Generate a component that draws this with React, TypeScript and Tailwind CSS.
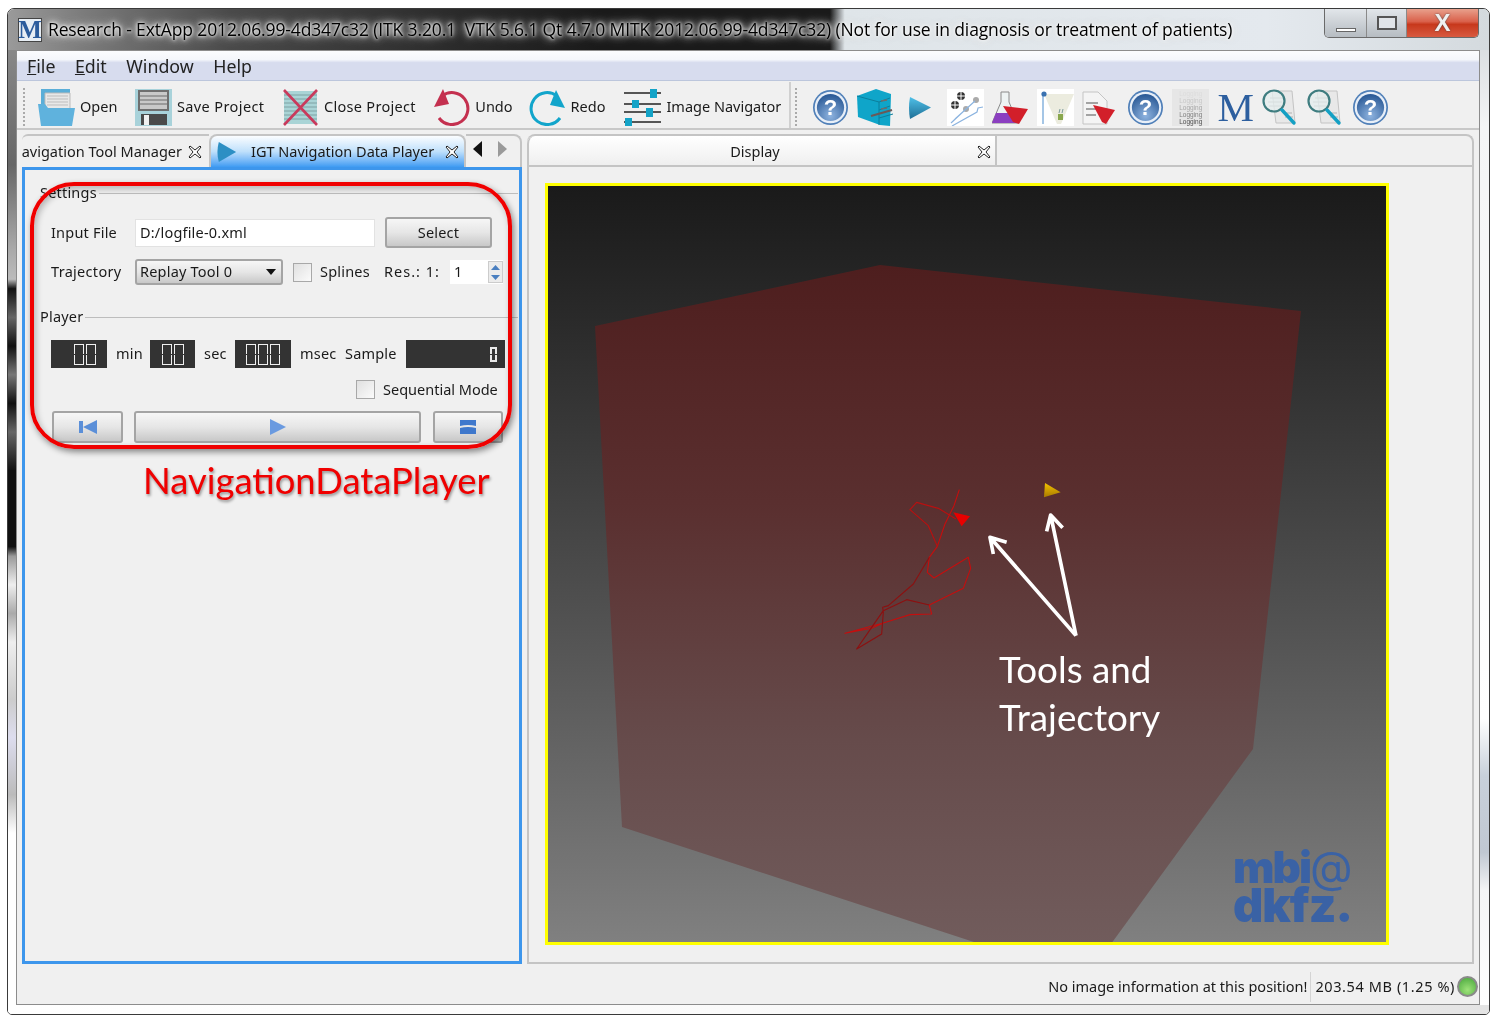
import React from "react";

const Help = () => (
  <svg width="37" height="37" viewBox="0 0 37 37">
    <defs>
      <radialGradient id="hg" cx="50%" cy="80%" r="75%">
        <stop offset="0" stopColor="#8fb4e0" />
        <stop offset="1" stopColor="#2d5c98" />
      </radialGradient>
    </defs>
    <circle cx="18.500" cy="18.500" r="17.500" fill="#4f7fb8" />
    <circle cx="18.500" cy="18.500" r="15.800" fill="#e8eff8" />
    <circle cx="18.500" cy="18.500" r="13.600" fill="url(#hg)" />
    <text x="18.500" y="26" textAnchor="middle" fontFamily="Liberation Sans" fontWeight="700" fontSize="22" fill="#fff">?</text>
  </svg>
);

const Open = () => (
  <svg width="37" height="37" viewBox="0 0 37 37">
    <path d="M3 0h29v33H3z" fill="#5aaed8" />
    <path d="M7 4h25v18H7z" fill="#e8e8e8" stroke="#bbb" />
    <path d="M9 7h21M9 10h21M9 13h21M9 16h21" stroke="#bdbdbd" />
    <path d="M0 15h7l3 4h27l-3 18H3z" fill="#5fb2dd" />
  </svg>
);
const Save = () => (
  <svg width="37" height="37" viewBox="0 0 37 37">
    <path d="M0 0h37v37H0z" fill="#a8d2da" />
    <path d="M3 1h31v21H3z" fill="#6f6f6f" />
    <path d="M5 3h27v17H5z" fill="#c9c9c9" />
    <path d="M5 7h27M5 11h27M5 15h27" stroke="#8a8a8a" strokeWidth="1.500" />
    <path d="M6 25h26v11H6z" fill="#4a4a4a" />
    <path d="M9 26h5v10H9z" fill="#f0f0f0" />
  </svg>
);
const CloseP = () => (
  <svg width="37" height="37" viewBox="0 0 37 37">
    <path d="M2 2h33v33H2z" fill="#a9d4d6" />
    <path d="M2 6h33M2 10h33M2 14h33M2 18h33M2 22h33M2 26h33M2 30h33" stroke="#7fa2a4" />
    <path d="M2 1l33 35M35 1L2 36" stroke="#c93a5c" strokeWidth="2.600" />
  </svg>
);
const Undo = () => (
  <svg width="37" height="37" viewBox="0 0 37 37">
    <path d="M9 7A16 16 0 1 1 6 29" fill="none" stroke="#c4304f" strokeWidth="3" />
    <path d="M1 18L10 0l6 15z" fill="#c4304f" />
  </svg>
);
const Redo = () => (
  <svg width="37" height="37" viewBox="0 0 37 37">
    <path d="M28 7A16 16 0 1 0 31 29" fill="none" stroke="#12a5cb" strokeWidth="3" />
    <path d="M36 19L27 1l-6 15z" fill="#12a5cb" />
  </svg>
);
const Nav = () => (
  <svg width="37" height="37" viewBox="0 0 37 37">
    <path d="M0 4h37M0 15h37M0 23h37M0 33h37" stroke="#555" strokeWidth="2.200" />
    <path d="M26 0h7v9h-7zM8 11h7v8H8zM22 19h7v9h-7zM1 29h7v8H1z" fill="#14a3c7" />
  </svg>
);
const Cabinet = () => (
  <svg width="37" height="37" viewBox="0 0 37 37">
    <path d="M0 7L19 0l15 5-1 32-10-1L1 28z" fill="#0fa5c9" />
    <path d="M0 7l22 6v23" stroke="#0b7f9c" fill="none" />
    <path d="M22 13l11-4M22 21l11-4M22 29l14-4" stroke="#0b7f9c" />
    <path d="M24 12l6-1M24 20l6-1" stroke="#6d6d6d" strokeWidth="1.600" />
    <path d="M14 27l21-6" stroke="#6a5a58" strokeWidth="2.200" />
  </svg>
);
const Play = () => (
  <svg width="37" height="37" viewBox="0 0 37 37">
    <defs>
      <linearGradient id="pg" x1="0" y1="0" x2="0" y2="1">
        <stop offset="0" stopColor="#4fc0e8" />
        <stop offset="1" stopColor="#1f6f96" />
      </linearGradient>
    </defs>
    <path d="M8 8l21 10.500L8 30q-2-11 0-22z" fill="url(#pg)" />
  </svg>
);
const Tools = () => (
  <svg width="37" height="37" viewBox="0 0 37 37">
    <path d="M0 0h37v37H0z" fill="#fff" />
    <circle cx="14" cy="7" r="4" fill="#333" />
    <circle cx="8" cy="16" r="4" fill="#333" />
    <path d="M14 3v8M10 7h8M8 12v8M4 16h8" stroke="#fff" />
    <circle cx="29" cy="11" r="3" fill="#aaa" />
    <circle cx="19" cy="20" r="3" fill="#aaa" />
    <path d="M28 12L8 30M19 20L4 34M36 18l-5 1-1 4L5 37" stroke="#8cb4e0" strokeWidth="1.200" fill="none" />
  </svg>
);
const Flask = () => (
  <svg width="37" height="37" viewBox="0 0 37 37">
    <path d="M9 3h8v10l9 21H0l9-21z" fill="#eef3f3" stroke="#8a8a8a" />
    <path d="M4 24h18l4 10H0z" fill="#8b3fc0" />
    <path d="M11 17l25 3-9 15-6-2z" fill="#d21f2a" />
  </svg>
);
const Ultra = () => (
  <svg width="37" height="37" viewBox="0 0 37 37">
    <path d="M0 0h37v37H0z" fill="#fff" />
    <path d="M7 5h30L24 35h-4z" fill="#ececdf" />
    <path d="M6 5v30" stroke="#8fb8e0" strokeWidth="1.600" />
    <circle cx="7" cy="5" r="2.600" fill="#3a72b0" />
    <path d="M21 25h5v6h-5z" fill="#8aa84e" />
    <path d="M22 24l1-4M25 24l1-4" stroke="#7a9a9a" />
  </svg>
);
const Doc = () => (
  <svg width="37" height="37" viewBox="0 0 37 37">
    <path d="M1 3h15l9 9v23H1z" fill="#f4f4f4" stroke="#c4c4c4" />
    <path d="M4 14h12M4 20h10M4 26h10" stroke="#888" strokeWidth="1.600" />
    <path d="M11 16l22 5-9 14-4-2z" fill="#d21f2a" />
  </svg>
);
const Mag = () => (
  <svg width="37" height="37" viewBox="0 0 37 37">
    <path d="M10 2h20l3 32H14z" fill="#e8e8e8" stroke="#c4c4c4" />
    <path d="M8 9h14M6 13h14M7 17h14M22 24h8M23 28h8" stroke="#b0b0b0" />
    <circle cx="12" cy="12" r="10.500" fill="#e4eeee" fillOpacity=".75" stroke="#3f7d80" strokeWidth="2.200" />
    <path d="M20 21l12 13" stroke="#14a0c4" strokeWidth="3.400" strokeLinecap="round" />
  </svg>
);
const Logging = () => (
  <div className="flex h-[37px] w-[37px] flex-col items-center justify-center bg-[#e6e6e6] font-['Liberation_Sans',sans-serif] text-[6.5px] leading-[7px]">
    <span className="text-[#dcdcdc]">Logging</span>
    <span className="text-[#c8c8c8]">Logging</span>
    <span className="text-[#a8a8a8]">Logging</span>
    <span className="text-[#808080]">Logging</span>
    <span className="text-[#505050]">Logging</span>
  </div>
);

const XIcon = () => (
  <svg width="14" height="14" viewBox="0 0 14 14" className="shrink-0">
    <path d="M2 1l5 4 5-4 1 1-4 5 4 5-1 1-5-4-5 4-1-1 4-5-4-5z" fill="#fff" stroke="#222" strokeWidth="1" />
  </svg>
);

const Digit = () => (
  <div className="flex h-[21px] w-[10px] flex-col justify-between">
    <div className="h-[10px] border-x border-t border-[#f0f0f0]" />
    <div className="h-[10px] border-x border-b border-[#f0f0f0]" />
  </div>
);
const Lcd = ({ n, w }: { n: number; w: string }) => (
  <div className={`flex h-[28px] items-center justify-end gap-[2px] bg-[#333333] pr-[11px] ${w}`}>
    {Array.from({ length: n }).map((_, i) => (
      <Digit key={i} />
    ))}
  </div>
);

const Check = () => (
  <div className="h-[19px] w-[19px] shrink-0 border border-[#a8a8a8] bg-[linear-gradient(135deg,#e0e0e0,#fbfbfb)] p-[2px]" />
);

const btn = "border-2 border-[#a4a4a4] rounded-[3px] bg-linear-to-b from-[#f6f6f6] via-[#e6e6e6] to-[#c8c8c8] flex items-center justify-center";

export default function App() {
  return (
    <div className="h-[1023px] w-[1493px] overflow-hidden bg-white pt-[8px] pl-[7px] font-['Noto_Sans',sans-serif] text-[14.5px] text-[#1a1a1a] blur-[0.4px]">
      <div className="relative flex h-[1007px] w-[1483px] flex-col overflow-hidden rounded-t-[7px] rounded-b-[5px] border border-[#3a3a3a] bg-white">
        {/* title bar */}
        <div className="flex h-[41px] shrink-0 items-center bg-[linear-gradient(90deg,#9a9a9a_0,#7c7c7c_5%,#4a4a4a_15%,#2b2b2b_30%,#1a1a1a_40%,#1a1a1a_55.5%,#dfe5e9_56.5%,#e4e9ee_85%,#d4dade_100%)] pl-[10px]">
          <div className="flex h-[24px] w-[24px] items-center justify-center border border-[#444] bg-[#e8eef4] font-['Liberation_Serif',serif] text-[25px] font-bold leading-none text-[#2c5c9c]">
            M
          </div>
          <span className="ml-[6px] whitespace-nowrap font-['Open_Sans',sans-serif] text-[17.5px] tracking-[-0.13px] text-[#000000] [text-shadow:0_0_3px_#fff,0_0_5px_#fff,0_0_8px_#eee,0_0_12px_#ccc]">
            Research - ExtApp 2012.06.99-4d347c32 (ITK 3.20.1&nbsp; VTK 5.6.1 Qt 4.7.0 MITK 2012.06.99-4d347c32) (Not for use in diagnosis or treatment of patients)
          </span>
          {/* window buttons */}
          <div className="absolute top-0 right-[10px] flex h-[29px] overflow-hidden rounded-b-[5px] border border-t-0 border-[#6a6a6a]">
            <div className="flex w-[42px] items-end justify-center border-r border-[#8a8a8a] bg-linear-to-b from-[#e2e6ea] to-[#b6bcc2] pb-[5px]">
              <div className="h-[4px] w-[20px] border border-[#666] bg-white" />
            </div>
            <div className="flex w-[40px] items-center justify-center border-r border-[#8a8a8a] bg-linear-to-b from-[#e2e6ea] to-[#b6bcc2]">
              <div className="h-[14px] w-[20px] border-2 border-[#555] bg-[#e0e4e8] p-[2px]" />
            </div>
            <div className="flex w-[71px] items-center justify-center bg-[linear-gradient(180deg,#e8a08c_0,#d9604a_45%,#c7381c_55%,#d85a40_100%)]">
              <span className="font-['Liberation_Sans',sans-serif] text-[24px] font-bold leading-none text-[#f0f0f0] [text-shadow:0_0_2px_#444]">X</span>
            </div>
          </div>
        </div>

        <div className="flex min-h-0 flex-1">
          {/* left frame */}
          <div className="w-[8px] shrink-0 bg-[linear-gradient(180deg,#888_0,#666_12%,#aaa_21%,#bbb_24%,#111_25%,#666_28%,#111_31%,#777_34%,#111_37%,#666_40%,#111_44%,#111_52%,#999_53%,#eee_56%,#aaa_59%,#eee_62%,#ccc_68%,#dde_72%,#bbb_78%,#fff_82%,#fff_100%)]" />
          <div className="flex min-w-0 flex-1 flex-col">
            {/* main */}
            <div className="flex min-h-0 flex-1 flex-col border border-[#8c8c8c] bg-[#f0f0f0]">
              {/* menu */}
              <div className="flex h-[30px] shrink-0 items-center gap-[19.5px] border-b border-[#bcc6dc] bg-[linear-gradient(180deg,#fbfcfe_0,#f4f6fb_30%,#d7dcee_40%,#d7dcee_100%)] pl-[10px] pt-[1px] text-[17.8px] text-[#222]">
                <span><span className="underline">F</span>ile</span>
                <span><span className="underline">E</span>dit</span>
                <span>Window</span>
                <span>Help</span>
              </div>
              {/* toolbar */}
              <div className="flex h-[49px] shrink-0 items-center border-b-2 border-[#c8c8c8] pl-[6px] pt-[5px]">
                <div className="h-[38px] w-[2px] border-l-2 border-dotted border-[#aaa]" />
                <div className="ml-[13px] flex items-center gap-[17.5px]">
                  <div className="flex items-center gap-[5px]"><Open /><span>Open</span></div>
                  <div className="flex items-center gap-[5px]"><Save /><span className="whitespace-nowrap tracking-[0.4px]">Save Project</span></div>
                  <div className="flex items-center gap-[5px]"><CloseP /><span className="whitespace-nowrap tracking-[0.3px]">Close Project</span></div>
                  <div className="flex items-center gap-[5px]"><Undo /><span>Undo</span></div>
                  <div className="-ml-[1.5px] flex items-center gap-[5px]"><Redo /><span>Redo</span></div>
                  <div className="ml-[1.5px] flex items-center gap-[5px]"><Nav /><span className="whitespace-nowrap">Image Navigator</span></div>
                </div>
                <div className="ml-[8px] h-[46px] w-[2px] -translate-y-[2px] border-l-2 border-[#d0d0d0]" />
                <div className="ml-[4px] h-[38px] w-[2px] border-l-2 border-dotted border-[#aaa]" />
                <div className="ml-[15px] flex items-center gap-[8px]">
                  <Help />
                  <Cabinet />
                  <Play />
                  <Tools />
                  <Flask />
                  <Ultra />
                  <Doc />
                  <Help />
                  <Logging />
                  <div className="flex h-[37px] w-[37px] items-center justify-center font-['Liberation_Serif',serif] text-[41px] leading-none text-[#2d5f9f]">M</div>
                  <Mag />
                  <Mag />
                  <Help />
                </div>
              </div>

              {/* panes */}
              <div className="flex min-h-0 flex-1 gap-[5px] px-[5px] pt-[4px]">
                {/* left pane */}
                <div className="relative flex w-[500px] shrink-0 flex-col">
                  <div className="flex h-[33px] shrink-0 items-stretch overflow-hidden">
                    <div className="flex w-[187px] shrink-0 items-center justify-end gap-[6px] overflow-hidden rounded-tl-[6px] border-t-2 border-[#c4c4c4] pr-[7px]">
                      <span className="whitespace-nowrap">Navigation Tool Manager</span>
                      <XIcon />
                    </div>
                    <div className="flex w-[257px] shrink-0 items-center rounded-t-[8px] border-2 border-b-0 border-[#c4c4c4] bg-linear-to-b from-[#fbfdff] via-[#bfe0fb] to-[#3d9bf2] pl-[6px]">
                      <div className="flex w-[20px] justify-center"><svg width="22" height="24" viewBox="0 0 22 24"><path d="M2 1l19 11L2 23q-3-11 0-22z" fill="#2c8fc4" /></svg></div>
                      <span className="ml-[14px] whitespace-nowrap">IGT Navigation Data Player</span>
                      <div className="ml-[11px]"><XIcon /></div>
                    </div>
                    <div className="flex flex-1 items-center rounded-tr-[8px] border-t-2 border-r-2 border-[#c4c4c4] pb-[5px] pl-[6px]">
                      <svg width="12" height="16" viewBox="0 0 12 16"><path d="M10 0v16L1 8z" fill="#111" /></svg>
                      <svg width="12" height="16" viewBox="0 0 12 16" className="ml-[12px]"><path d="M2 0v16l9-8z" fill="#9a9a9a" /></svg>
                    </div>
                  </div>
                  <div className="relative min-h-0 flex-1 border-[3px] border-[#3d96ec] bg-[#f0f0f0] tracking-[0.2px]">
                    {/* settings */}
                    <div className="mt-[13px] flex h-[20px] items-center pl-[15px] pr-[1px]">
                      <span>Settings</span>
                      <div className="ml-[2px] h-px flex-1 bg-[#bdbdbd]" />
                    </div>
                    <div className="mt-[14px] flex h-[31px] items-center pl-[26px]">
                      <span className="w-[84px]">Input File</span>
                      <div className="flex h-[28px] w-[240px] items-center border border-[#e2e2e2] bg-white pl-[4px]">D:/logfile-0.xml</div>
                      <div className={`ml-[10px] h-[31px] w-[107px] ${btn}`}>Select</div>
                    </div>
                    <div className="mt-[11px] flex h-[26px] items-center pl-[26px]">
                      <span className="w-[84px] tracking-[0.3px]">Trajectory</span>
                      <div className={`h-[26px] w-[148px] justify-between! pl-[3px] pr-[5px] ${btn}`}>
                        <span>Replay Tool 0</span>
                        <svg width="10" height="6" viewBox="0 0 10 6"><path d="M0 0h10L5 6z" fill="#111" /></svg>
                      </div>
                      <div className="ml-[10px]"><Check /></div>
                      <span className="ml-[8px] w-[50px]">Splines</span>
                      <span className="ml-[14px] w-[56px] whitespace-nowrap tracking-[1px]">Res.: 1:</span>
                      <div className="ml-[10px] flex h-[24px] w-[53px] items-center justify-between bg-white pl-[4px]">
                        <span>1</span>
                        <div className="flex h-[22px] w-[15px] flex-col items-center justify-around border border-[#ccc] bg-[#ececec]">
                          <svg width="9" height="5" viewBox="0 0 9 5"><path d="M0 5h9L4.500 0z" fill="#4a7fc0" /></svg>
                          <svg width="9" height="5" viewBox="0 0 9 5"><path d="M0 0h9L4.500 5z" fill="#4a7fc0" /></svg>
                        </div>
                      </div>
                    </div>
                    {/* player */}
                    <div className="mt-[22px] flex h-[20px] items-center pl-[15px] pr-[1px]">
                      <span>Player</span>
                      <div className="ml-[2px] h-px flex-1 bg-[#bdbdbd]" />
                    </div>
                    <div className="mt-[13px] flex h-[28px] items-center pl-[26px]">
                      <Lcd n={2} w="w-[56px]" />
                      <span className="ml-[9px] w-[26px]">min</span>
                      <div className="ml-[8px]"><Lcd n={2} w="w-[45px]" /></div>
                      <span className="ml-[9px] w-[24px]">sec</span>
                      <div className="ml-[7px]"><Lcd n={3} w="w-[56px]" /></div>
                      <span className="ml-[9px] w-[37px]">msec</span>
                      <span className="ml-[8px] w-[52px]">Sample</span>
                      <div className="ml-[9px] flex h-[28px] w-[99px] items-center justify-end bg-[#333333] pr-[8px]">
                        <div className="flex h-[15px] w-[7px] flex-col justify-between">
                          <div className="h-[7px] border-x-2 border-t-2 border-[#e8e8e8]" />
                          <div className="h-[7px] border-x-2 border-b-2 border-[#e8e8e8]" />
                        </div>
                      </div>
                    </div>
                    <div className="mt-[12px] flex h-[19px] items-center pl-[331px]">
                      <Check />
                      <span className="ml-[8px] whitespace-nowrap tracking-normal">Sequential Mode</span>
                    </div>
                    <div className="mt-[12px] flex h-[32px] pl-[27px]">
                      <div className={`w-[71px] ${btn}`}>
                        <svg width="18" height="14" viewBox="0 0 18 14"><path d="M0 1h4v12H0zM18 0v14L4 7z" fill="#5b8fd8" /></svg>
                      </div>
                      <div className={`ml-[11px] w-[287px] ${btn}`}>
                        <svg width="16" height="16" viewBox="0 0 16 16"><path d="M0 0l16 8-16 8z" fill="#6a9ae0" /></svg>
                      </div>
                      <div className={`ml-[12px] w-[70px] ${btn}`}>
                        <svg width="16" height="14" viewBox="0 0 16 14"><path d="M0 0h16v6q-8-2-16 0zM0 8q8-2 16 0v6H0z" fill="#3f78cc" /></svg>
                      </div>
                    </div>
                    {/* annotation */}
                    <div className="absolute top-[12px] left-[5px] h-[267px] w-[482px] rounded-[44px] border-4 border-[#f00000] shadow-[2px_3px_6px_rgba(0,0,0,.45),inset_2px_3px_6px_rgba(0,0,0,.25)]" />
                    <div className="absolute top-[285px] left-[118px] whitespace-nowrap font-['Lato',sans-serif] text-[36.4px] leading-[50px] tracking-normal text-[#f00000] [text-shadow:1px_2px_3px_rgba(0,0,0,.4)]">
                      NavigationDataPlayer
                    </div>
                  </div>
                </div>

                {/* right pane */}
                <div className="flex min-w-0 flex-1 flex-col">
                  <div className="flex h-[31px] shrink-0 rounded-t-[8px] border-t-2 border-r-2 border-[#c4c4c4]">
                    <div className="flex w-[470px] items-center rounded-tl-[8px] border-x-2 border-[#c4c4c4] bg-linear-to-b from-white to-[#efefef] pr-[4px] pt-[2px]">
                      <span className="flex-1 pl-[4px] text-center">Display</span>
                      <XIcon />
                    </div>
                  </div>
                  <div className="min-h-0 flex-1 border-2 border-[#c4c4c4] p-[16px]">
                    <div className="relative h-[762px] w-[844px] overflow-hidden border-[3px] border-[#ffff00] bg-linear-to-b from-[#1a1a1a] to-[#808080]">
                      <svg className="absolute inset-0" width="838" height="756" viewBox="548 187 838 756">
                        <defs>
                          <linearGradient id="cube" gradientUnits="userSpaceOnUse" x1="0" y1="266" x2="0" y2="945">
                            <stop offset="0" stopColor="#4e1e1e" />
                            <stop offset=".35" stopColor="#5a2f2f" />
                            <stop offset=".7" stopColor="#664b4b" />
                            <stop offset="1" stopColor="#715c5c" />
                          </linearGradient>
                          <linearGradient id="gold" x1="0" y1="0" x2="0" y2="1">
                            <stop offset="0" stopColor="#f2c200" />
                            <stop offset="1" stopColor="#a87a00" />
                          </linearGradient>
                        </defs>
                        <polygon points="595,327 880,266 1301,312 1253,750 1111,945 980,945 622,828" fill="url(#cube)" />
                        <g transform="translate(830 470) scale(.3333)" fill="none" strokeWidth="3.400" strokeLinejoin="round">
                          <path d="M388 62L372 110 345 165 322 232 298 265 292 310 312 327 415 265 422 298 400 358 345 385 298 408 305 435 240 437 160 462 45 493 125 478 160 462" stroke="#c40e0e" />
                          <path d="M322 232L295 170 240 122 260 100 325 118 378 150" stroke="#b81010" />
                          <path d="M298 265L250 345 175 410 158 415 160 430 155 495 80 540 125 475 160 425 230 392 298 408" stroke="#8c1010" />
                          <polygon points="370,130 420,142 395,172" fill="#e80000" stroke="none" />
                          <polygon points="645,42 692,70 642,85" fill="url(#gold)" stroke="none" />
                          <g stroke="#fff" strokeWidth="11">
                            <path d="M738 500L480 205M490 255L480 205 530 220" />
                            <path d="M738 500L662 138M650 187L662 138 698 176" />
                          </g>
                        </g>
                      </svg>
                      <div className="absolute top-[459px] left-[451px] font-['Lato',sans-serif] text-[36.8px] leading-[48px] text-white">
                        Tools and<br />Trajectory
                      </div>
                      <div className="absolute top-[662px] left-[685px] flex flex-col font-['Inter',sans-serif] font-black leading-[38px] text-[#3a62a5]">
                        <span className="text-[44px] tracking-[-2px]">mbi<span className="font-normal">@</span></span>
                        <span className="text-[47px] tracking-[-1px]">dkfz.</span>
                      </div>
                    </div>
                  </div>
                </div>
              </div>

              {/* status */}
              <div className="flex h-[40px] shrink-0 items-center justify-end pt-[5px] pr-[1px]">
                <span className="whitespace-nowrap">No image information at this position!</span>
                <div className="ml-[3px] h-[30px] w-px bg-[#d4d4d4]" />
                <span className="ml-[4px] whitespace-nowrap tracking-[0.6px]">203.54 MB (1.25 %)</span>
                <div className="ml-[2px] h-[21px] w-[21px] rounded-full border-2 border-[#8a8a8a] bg-[radial-gradient(circle_at_50%_70%,#9ee27a,#46a53a)]" />
              </div>
            </div>
          </div>
          {/* right frame */}
          <div className="w-[9px] shrink-0 bg-[linear-gradient(180deg,#dcdfe2_0,#f4f5f6_8%,#fff_70%,#c8d0da_76%,#c0c8d2_84%,#f4f5f6_88%,#fff_100%)]" />
        </div>
        <div className="h-[9px] shrink-0 bg-linear-to-r from-white via-[#fafafa] to-[#e4e4e4]" />
      </div>
    </div>
  );
}
